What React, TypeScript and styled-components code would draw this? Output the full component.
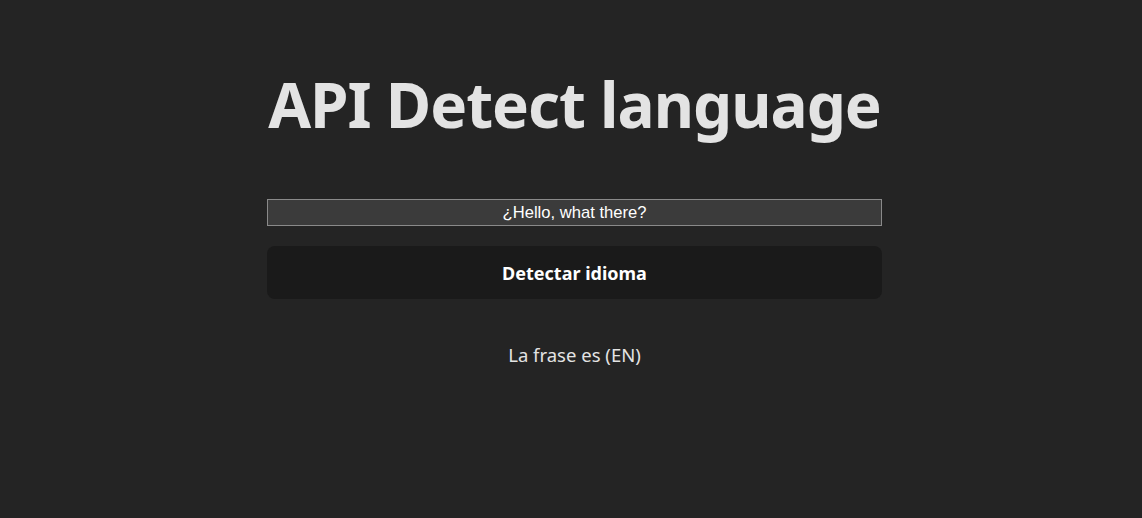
import React from "react";
import styled, { createGlobalStyle } from "styled-components";

const Global = createGlobalStyle`
  html, body { margin: 0; padding: 0; background: #242424; }
  body { font-family: "Noto Sans", "Open Sans", sans-serif; color: rgba(255,255,255,0.87); }
`;

const Page = styled.div`
  min-height: 518px;
  display: flex;
  justify-content: center;
  padding-left: 7px;
  box-sizing: border-box;
`;

const Column = styled.main`
  width: 615px;
  display: flex;
  flex-direction: column;
  align-items: stretch;
  padding-top: 62px;
`;

const Title = styled.h1`
  margin: 0;
  text-align: center;
  font-size: 62px;
  font-weight: 700;
  line-height: 84px;
  letter-spacing: -1px;
  color: #e3e3e3;
`;

const Input = styled.input`
  margin-top: 53px;
  height: 27px;
  box-sizing: border-box;
  background: #3b3b3b;
  border: 1px solid #8a8a8a;
  color: #ffffff;
  font-family: "Liberation Sans", Arial, sans-serif;
  font-size: 16.6px;
  text-align: center;
  padding: 1px 0 0;
  outline: none;
`;

const Button = styled.button`
  margin-top: 20px;
  height: 53px;
  background: #1a1a1a;
  border: none;
  border-radius: 8px;
  color: #ffffff;
  font-family: "Noto Sans", sans-serif;
  font-size: 18px;
  font-weight: 700;
  padding-top: 2px;
  cursor: pointer;
`;

const Result = styled.p`
  margin: 43px 0 0;
  text-align: center;
  font-size: 18.5px;
  line-height: 26px;
  color: #e3e3e3;
`;

export default function App() {
  return (
    <>
      <Global />
      <Page>
        <Column>
          <Title>API Detect language</Title>
          <Input defaultValue="¿Hello, what there?" />
          <Button>Detectar idioma</Button>
          <Result>La frase es (EN)</Result>
        </Column>
      </Page>
    </>
  );
}
